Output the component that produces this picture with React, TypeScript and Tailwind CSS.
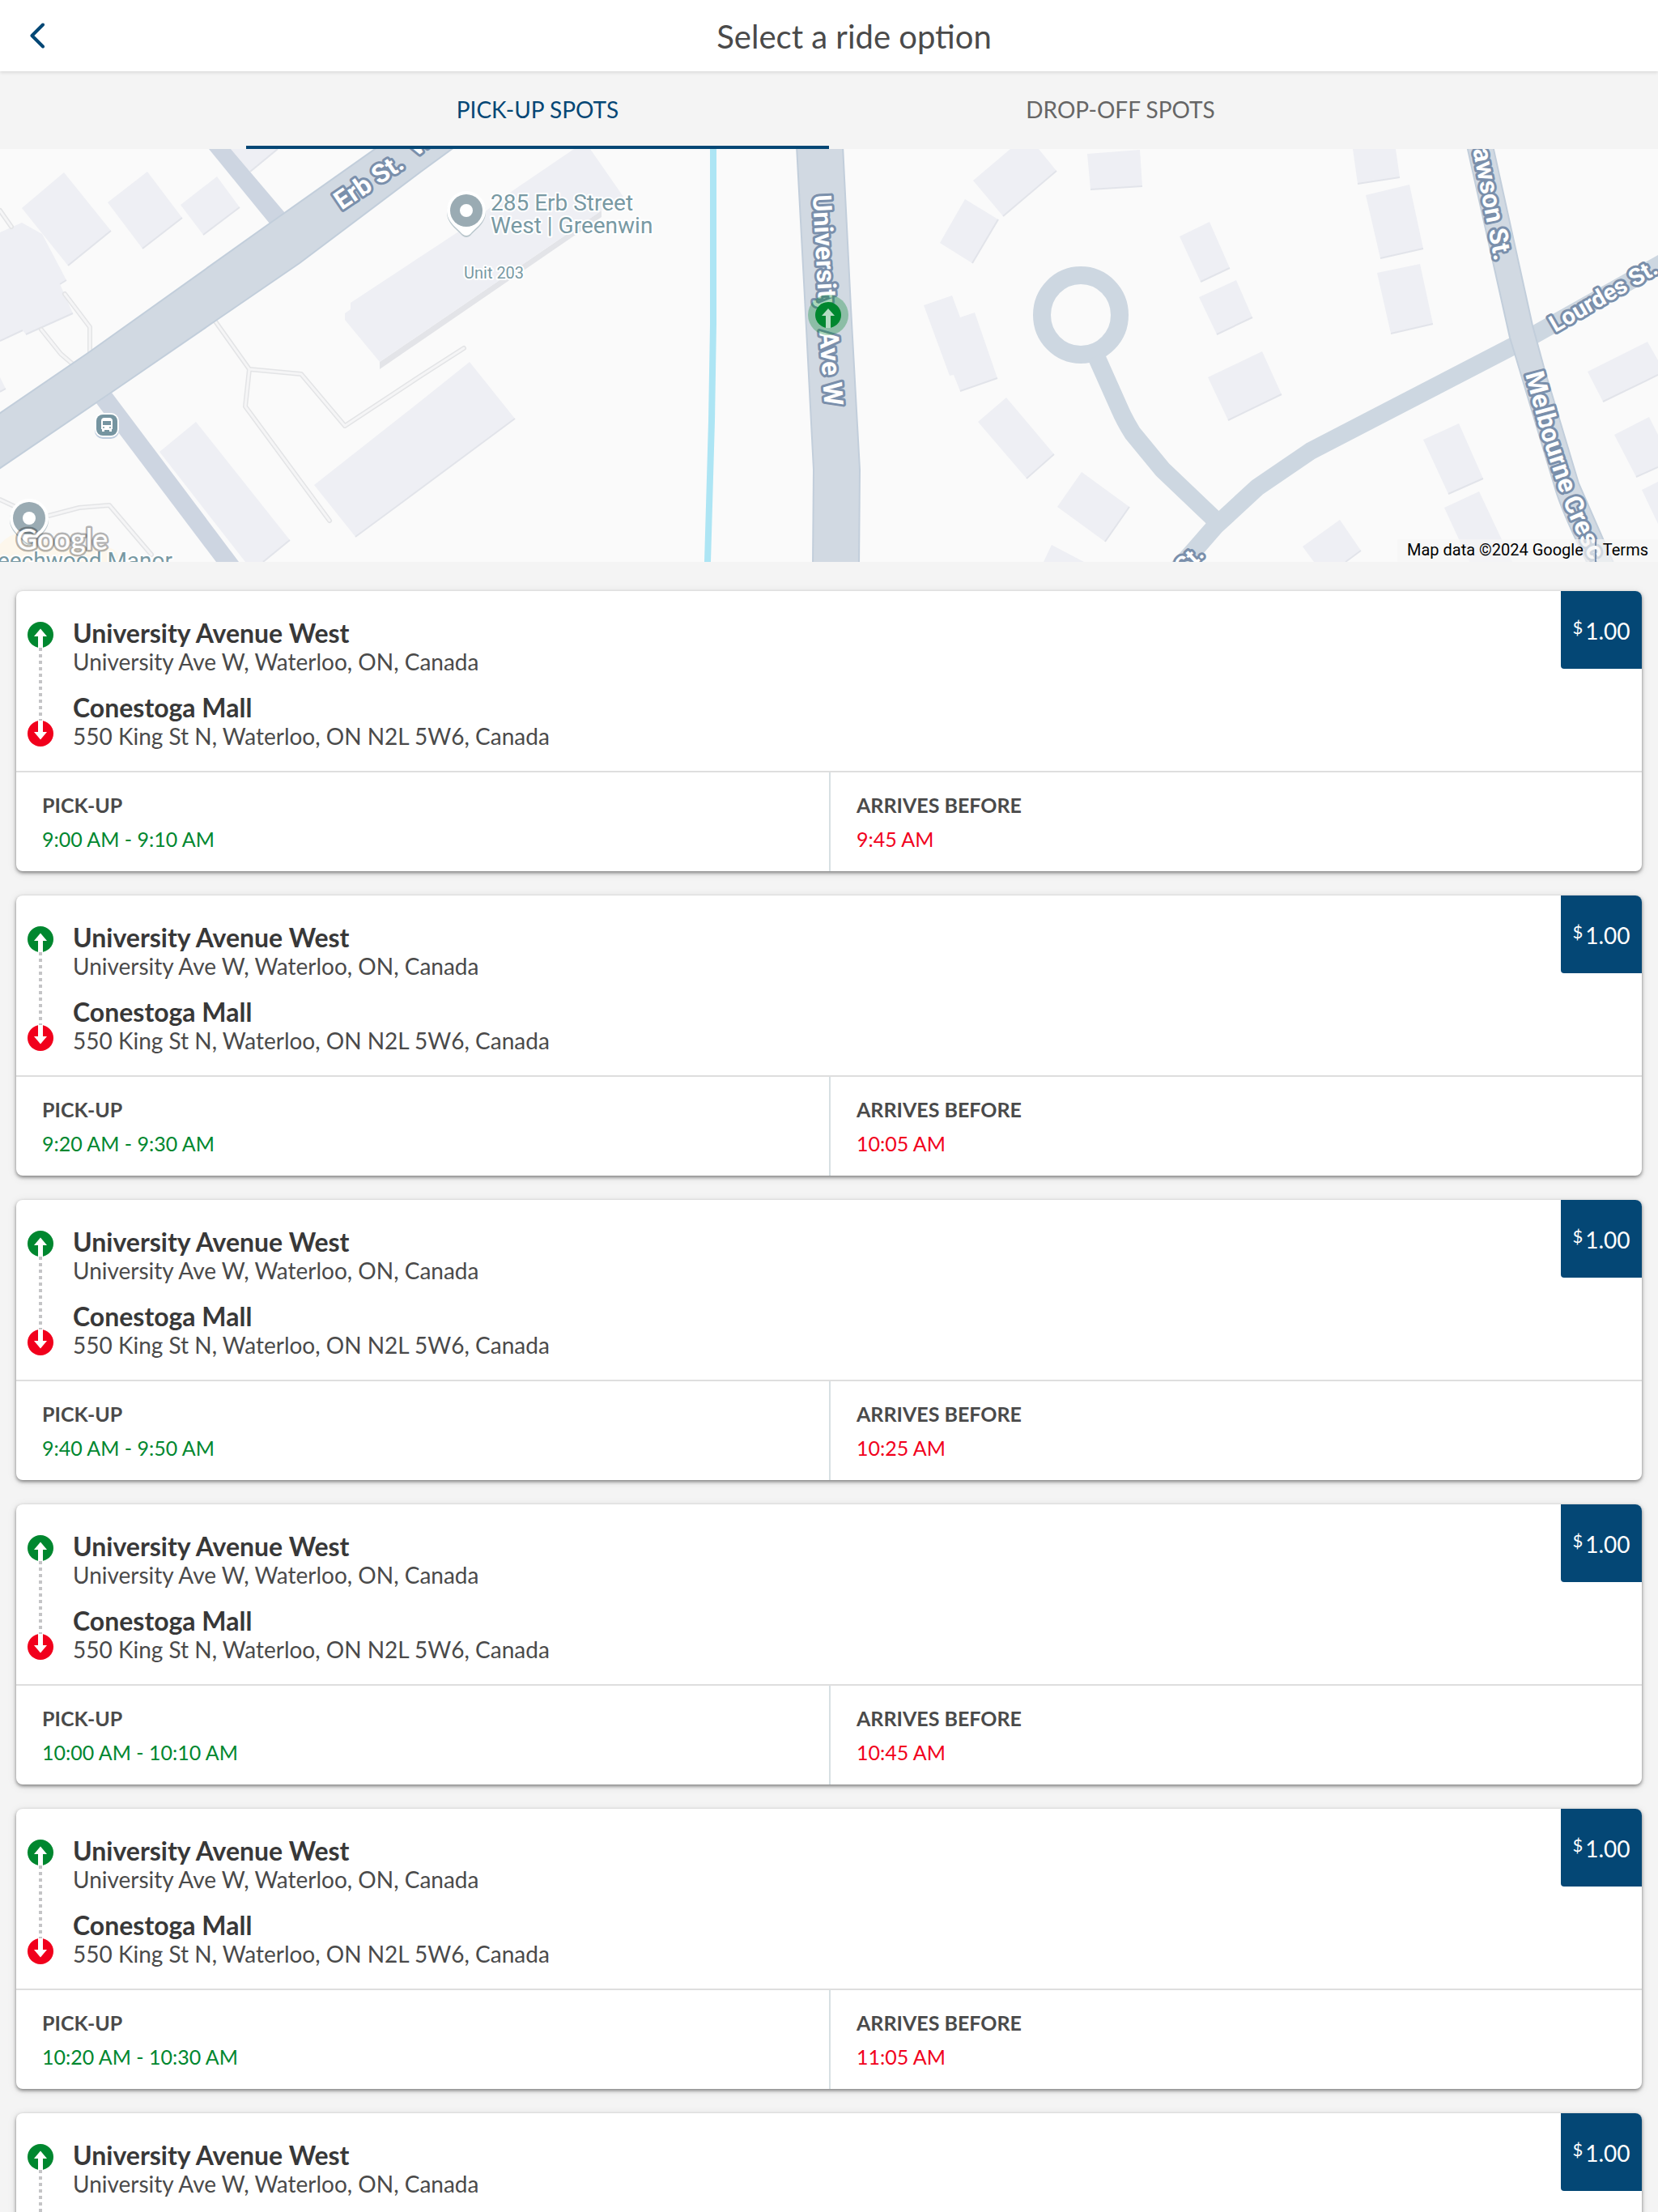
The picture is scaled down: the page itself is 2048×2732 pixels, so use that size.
import React, { useState } from 'react';

const rides = [
  { id: 1, pickUp: '9:00 AM - 9:10 AM', arrival: '9:45 AM' },
  { id: 2, pickUp: '9:20 AM - 9:30 AM', arrival: '10:05 AM' },
  { id: 3, pickUp: '9:40 AM - 9:50 AM', arrival: '10:25 AM' },
  { id: 4, pickUp: '10:00 AM - 10:10 AM', arrival: '10:45 AM' },
  { id: 5, pickUp: '10:20 AM - 10:30 AM', arrival: '11:05 AM' },
  { id: 6, pickUp: '10:40 AM - 10:50 AM', arrival: '11:25 AM' },
];

const tabs = ['PICK-UP SPOTS', 'DROP-OFF SPOTS'];

const buildings = [
  '27,257 79,213 137,285 84,328',
  '133,250 182,212 225,269 176,307',
  '223,253 268,218 296,256 251,290',
  '0,287 27,275 52,289 82,346 74,351 90,387 32,413 28,408 0,421',
  '0,466 7,480 0,484',
  '285,184 343,184 309,212',
  '426,387 433,382 433,374 565,287 634,235 709,184 729,184 770,243 743,260 469,447 426,395',
  '388,599 520,495 580,447 636,517 500,618 439,663',
  '197,558 242,521 358,667 325,694 303,694',
  '1202,223 1248,184 1283,184 1305,211 1239,267',
  '1343,190 1408,185 1411,230 1347,234',
  '1192,246 1233,271 1201,325 1161,300',
  '1457,292 1494,274 1519,331 1483,348',
  '1481,367 1527,346 1547,392 1503,413',
  '1492,466 1559,434 1583,487 1517,519',
  '1141,377 1176,365 1186,392 1204,386 1232,467 1186,483 1178,463 1173,464',
  '1208,521 1243,491 1302,561 1268,591',
  '1306,626 1336,583 1395,626 1365,669',
  '1299,673 1339,694 1289,694',
  '1671,184 1724,184 1729,219 1677,227',
  '1687,241 1741,228 1758,307 1705,319',
  '1701,337 1754,326 1770,400 1718,412',
  '1758,543 1802,523 1832,591 1789,610',
  '1784,627 1827,607 1868,694 1815,694',
  '1609,675 1655,642 1681,680 1662,694 1623,694',
  '1961,459 2035,422 2048,445 2048,463 1980,496',
  '1994,537 2037,515 2048,537 2048,577 2021,589',
  '2028,605 2048,595 2048,647',
];

const buildingEdges = [
  '84,328 137,285',
  '176,307 225,269',
  '251,290 296,256',
  '0,421 28,408',
  '32,413 90,387',
  '0,484 7,480',
  '74,351 82,346',
  '309,212 343,184',
  '439,663 500,618 636,517',
  '325,694 358,667',
  '1239,267 1305,211',
  '1347,234 1411,230',
  '1201,325 1233,271',
  '1483,348 1519,331',
  '1503,413 1547,392',
  '1517,519 1583,487',
  '1186,483 1232,467',
  '1268,591 1302,561',
  '1365,669 1395,626',
  '1677,227 1729,219',
  '1705,319 1758,307',
  '1718,412 1770,400',
  '1789,610 1832,591',
  '1662,694 1681,680',
  '1980,496 2048,463',
  '2021,589 2048,577',
];

const footpaths = [
  '266,397 308,456 372,462 426,526 520,464 573,430',
  '308,456 303,502 407,643',
  '80,363 111,404 111,437',
  '51,407 75,437 89,449',
  '0,260 14,280',
  '0,617 17,625',
  '60,637 98,627 135,624 187,685',
];

const StopIcon = ({ kind }: { kind: 'pickup' | 'dropoff' }) => (
  <svg viewBox="0 0 32 32" className="block h-8 w-8" aria-hidden="true">
    <circle cx="16" cy="16" r="16" fill={kind === 'pickup' ? '#00872f' : '#f1001c'} />
    <path
      d="M16 8.5 24 18H19V32H13V18H8Z"
      fill="#fff"
      transform={kind === 'pickup' ? undefined : 'rotate(180 16 16)'}
    />
  </svg>
);

const PlacePin = ({ x, y }: { x: number; y: number }) => (
  <g transform={`translate(${x} ${y})`}>
    <path d="M0-24A24 24 0 0 1 24 0C24 14 12 21 5 29Q0 33-5 29C-12 21-24 14-24 0A24 24 0 0 1 0-24Z" fill="#b9c6cc" transform="translate(0 2)" />
    <path d="M0-24A24 24 0 0 1 24 0C24 14 12 21 5 29Q0 33-5 29C-12 21-24 14-24 0A24 24 0 0 1 0-24Z" fill="#fff" />
    <circle r="20" fill="#9aabb3" />
    <circle r="8" fill="#fff" />
  </g>
);

const RideMap = () => (
  <div className="relative h-[510px] shrink-0 overflow-hidden bg-[#fafafa]">
    <svg
      viewBox="0 184 2048 510"
      preserveAspectRatio="xMidYMid slice"
      className="block h-full w-full font-['Roboto',sans-serif]"
      role="img"
      aria-label="Map of pick-up spots"
    >
      <rect y="184" width="2048" height="510" fill="#fafafa" />
      <path d="M0 672Q18 652 40 662L70 676H130Q146 676 148 694H0Z" fill="#fdf7ec" />
      {/* Buildings */}
      <path d="M469 447 743 260V268L469 456Z" fill="#e3e4e8" />
      {buildings.map(points => <polygon key={points} points={points} fill="#eeeff4" />)}
      {buildingEdges.map(points => <polyline key={points} points={points} fill="none" stroke="#e2e4ea" strokeWidth="2" />)}
      {/* Footpaths */}
      <g fill="none" strokeLinejoin="round" strokeLinecap="round">
        {footpaths.map(points => <polyline key={points} points={points} stroke="#e3e4e6" strokeWidth="6" />)}
        {footpaths.map(points => <polyline key={points} points={points} stroke="#f5f5f6" strokeWidth="3" />)}
      </g>
      {/* Minor roads */}
      <polygon points="258,184 285,184 352,263 333,276" fill="#cdd5e1" />
      <polygon points="119,498 138,485 295,694 267,694" fill="#cdd5e1" />
      <g fill="none" stroke="#cdd7e1" strokeWidth="22">
        <ellipse cx="1335" cy="389" rx="48" ry="49" />
        <path d="M1354 440 1383 505Q1389 519 1399 535L1436 580 1500 641" />
        <path d="M1455 702 1474 681 1501 650 1553 602 1619 557 1868 428 1896 413 2056 323" strokeLinejoin="round" />
      </g>
      <path d="M881 184V400L879 520 874 694" fill="none" stroke="#ade5f4" strokeWidth="8" />
      {/* Main roads */}
      <g fill="#d1d9e2" stroke="#c2cedb" strokeWidth="2">
        <path d="M-4 513 110 435 333 276 466 182H561L520 212 370 325 265 397 137 485-4 581Z" />
        <path d="M984 180 994 367 1005 580 1004 700H1061L1062 580 1051 380 1041 180Z" />
        <path d="M1812 180 1865 417 1872 440 1923 610Q1935 645 1964 702H1996L1950 597 1908 457 1893 402 1844 180Z" />
      </g>
      {/* Street names */}
      <defs>
        <path id="melbourne" d="M1884 462 1905 540 1930 617Q1942 650 1980 724" />
      </defs>
      <g fill="#fff" stroke="#7a8fab" strokeWidth="6" strokeLinejoin="round" fontSize="32" fontWeight="700" className="[paint-order:stroke]">
        <text transform="translate(422 260) rotate(-34)">Erb St.</text>
        <text transform="translate(514 194) rotate(-38)">W</text>
        <text transform="translate(1004 241) rotate(87)">University</text>
        <text transform="translate(1012 409) rotate(86)" fontSize="33">Ave W</text>
        <text transform="translate(1846 323) rotate(79)" textAnchor="end">Dawson St.</text>
        <text transform="translate(1921 411) rotate(-30)" fontSize="29">Lourdes St.</text>
        <text transform="translate(1489 686) rotate(-43)" fontSize="29" textAnchor="end">Lourdes St.</text>
        <text><textPath href="#melbourne">Melbourne Cresc.</textPath></text>
      </g>
      {/* Places */}
      <PlacePin x={576} y={260} />
      <PlacePin x={36} y={640} />
      <g fill="#7899a3" stroke="#fff" strokeWidth="4" strokeLinejoin="round" fontSize="28" className="[paint-order:stroke]">
        <text x="606" y="260">285 Erb Street</text>
        <text x="606" y="288">West | Greenwin</text>
        <text x="573" y="344" fontSize="20">Unit 203</text>
        <text x="213" y="702" textAnchor="end">Beechwood Manor</text>
      </g>
      <g transform="translate(132 525)">
        <rect x="-15" y="-13" width="30" height="30" rx="10" fill="#bccbdd" />
        <rect x="-15" y="-15" width="30" height="30" rx="10" fill="#fff" />
        <rect x="-13" y="-13" width="26" height="26" rx="8" fill="#7594a0" />
        <path d="M-7-5Q-7-9-3-9H3Q7-9 7-5V5H6V8H3V6H-3V8H-6V5H-7Z" fill="#fff" />
        <path d="M-5-5H5V0H-5Z" fill="#7594a0" />
        <circle cx="-4" cy="3" r="1" fill="#7594a0" />
        <circle cx="4" cy="3" r="1" fill="#7594a0" />
      </g>
      {/* Pick-up marker */}
      <g transform="translate(1023 389)">
        <circle r="25" fill="#00872f" fillOpacity="0.33" />
        <circle r="16" fill="#00872f" />
        <path d="M0-8 8 1H3V16H-3V1H-8Z" fill="#b5dcc3" />
      </g>
      <text x="20" y="679" fontSize="36" fontWeight="500" fill="#fff" stroke="#000" strokeOpacity="0.3" strokeWidth="5" strokeLinejoin="round" className="font-['Lato',sans-serif] [paint-order:stroke]">
        Google
      </text>
    </svg>
    <div className="absolute right-0 bottom-0 flex gap-[2px] font-['Roboto',sans-serif] text-[20px] leading-[26px] text-black">
      <span className="bg-[#f5f5f5]/70 pr-[14px] pb-[2px] pl-3">Map data ©2024 Google</span>
      <a href="#terms" className="bg-[#f5f5f5]/70 pr-3 pb-[2px] pl-2">Terms</a>
    </div>
  </div>
);

const RideCard = ({ pickUp, arrival }: { pickUp: string; arrival: string }) => (
  <li className="relative shrink-0 rounded-lg bg-white shadow-[0_2px_4px_rgba(0,0,0,0.45),0_2px_12px_rgba(0,0,0,0.1)]">
    <div className="flex gap-6 pt-[34px] pr-32 pb-[26px] pl-[14px]">
      <div className="flex flex-col items-center py-1">
        <StopIcon kind="pickup" />
        <div className="w-1 flex-1 bg-[repeating-linear-gradient(to_bottom,#c4c4c6_0,#c4c4c6_4px,transparent_4px,transparent_8px)]" />
        <StopIcon kind="dropoff" />
      </div>
      <div className="flex flex-col gap-[22px]">
        <div>
          <h2 className="text-[32px] leading-9 font-bold text-[#383838]">University Avenue West</h2>
          <p className="text-[28px] leading-[34px]">University Ave W, Waterloo, ON, Canada</p>
        </div>
        <div>
          <h2 className="text-[32px] leading-9 font-bold text-[#383838]">Conestoga Mall</h2>
          <p className="text-[28px] leading-[34px]">550 King St N, Waterloo, ON N2L 5W6, Canada</p>
        </div>
      </div>
    </div>
    <dl className="grid grid-cols-2 border-t-2 border-[#dedede] text-[25px] leading-[42px]">
      <div className="px-8 py-[19px]">
        <dt className="font-bold">PICK-UP</dt>
        <dd className="text-[#00872f]">{pickUp}</dd>
      </div>
      <div className="border-l-2 border-[#d7e0e3] px-8 py-[19px]">
        <dt className="font-bold">ARRIVES BEFORE</dt>
        <dd className="text-[#f1001c]">{arrival}</dd>
      </div>
    </dl>
    <div className="absolute top-0 right-0 flex h-24 w-[100px] items-center justify-center gap-[3px] rounded-tr-lg rounded-bl bg-[#044775] pt-[2px] text-white">
      <span className="pb-2 text-[22px] leading-6">$</span>
      <span className="text-[28px] leading-9">1.00</span>
    </div>
  </li>
);

const App = () => {
  const [activeTab, setActiveTab] = useState(tabs[0]);
  return (
    <div className="flex h-screen flex-col overflow-hidden bg-[#f4f4f4] font-['Lato',sans-serif] text-[#4a4a4a]">
      <header className="z-10 grid h-[88px] shrink-0 grid-cols-[96px_1fr_34px] items-center bg-white shadow-[0_2px_4px_rgba(0,0,0,0.1)]">
        <button type="button" aria-label="Back" className="flex h-full items-center pl-9 text-[#044775]">
          <svg viewBox="0 0 20 32" className="h-8 w-5" fill="none" stroke="currentColor" strokeWidth="4" strokeLinecap="round" strokeLinejoin="round">
            <path d="M17 2.5 3.5 16 17 29.5" />
          </svg>
        </button>
        <h1 className="pt-[2px] text-center text-[40px] leading-[48px]">Select a ride option</h1>
      </header>
      <div role="tablist" className="flex h-24 shrink-0 justify-center">
        {tabs.map(tab => (
          <button
            key={tab}
            type="button"
            role="tab"
            aria-selected={activeTab === tab}
            onClick={() => setActiveTab(tab)}
            className={`w-[720px] border-b-4 pt-[2px] text-[28px] leading-9 ${activeTab === tab ? 'border-[#044775] text-[#044775]' : 'border-transparent text-[#666]'}`}
          >
            {tab}
          </button>
        ))}
      </div>
      <RideMap />
      <ul className="flex min-h-0 flex-1 flex-col gap-[30px] overflow-y-auto px-5 pt-9 pb-8 [scrollbar-width:none]">
        {rides.map(ride => <RideCard key={ride.id} pickUp={ride.pickUp} arrival={ride.arrival} />)}
      </ul>
    </div>
  );
};

export default App;
